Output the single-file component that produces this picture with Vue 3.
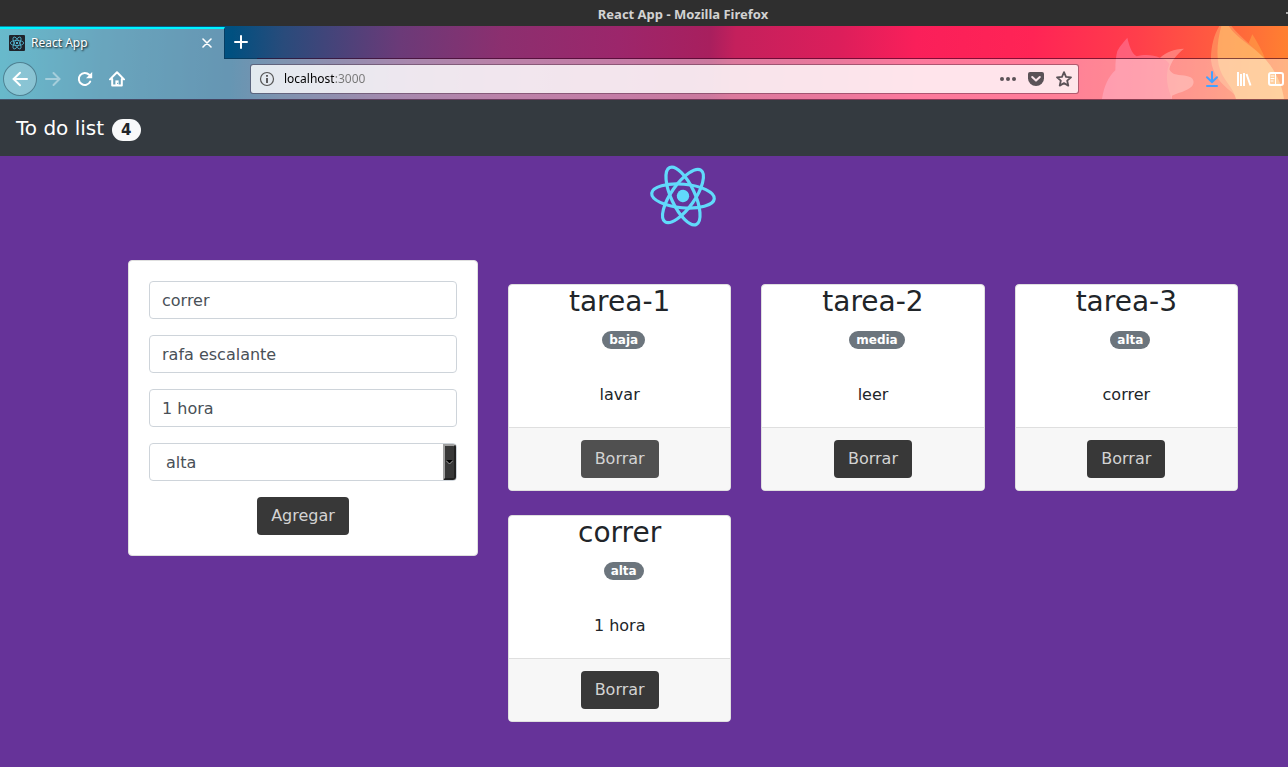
<script setup>
import { ref } from 'vue'

const url = ref('localhost:3000')
const form = ref({ title: 'correr', responsible: 'rafa escalante', description: '1 hora', priority: 'alta' })
const priorities = ['baja', 'media', 'alta']
const tasks = ref([
  { title: 'tarea-1', priority: 'baja', description: 'lavar', hovered: true },
  { title: 'tarea-2', priority: 'media', description: 'leer' },
  { title: 'tarea-3', priority: 'alta', description: 'correr' },
  { title: 'correr', priority: 'alta', description: '1 hora' }
])

function addTask() {
  tasks.value.push({ ...form.value })
}
function removeTask(index) {
  tasks.value.splice(index, 1)
}
</script>

<template>
  <div class="window">
    <div class="titlebar">
      <span class="window-title">React App - Mozilla Firefox</span>
      <span class="minimize"></span>
    </div>

    <header class="chrome">
      <svg class="foxes" viewBox="0 3 594 219" aria-hidden="true">
        <path d="M36 222C42 185 55 155 76 136C76 112 78 92 82 78C90 62 102 50 112 38C117 60 124 84 140 94C160 88 188 88 210 98C230 82 252 71 282 71C262 86 242 110 238 133C245 152 270 150 290 153C312 157 315 172 306 184C290 200 262 204 246 212V222Z" fill="#ff9cc4" fill-opacity=".38" />
        <path d="M210 98C230 82 252 71 282 71C262 86 242 110 238 133C245 152 270 150 290 153C312 157 315 172 306 184C290 200 262 204 246 212V222C232 190 224 150 238 118C235 108 222 102 210 98Z" fill="#ffb480" fill-opacity=".28" />
        <path d="M388 3C372 28 362 68 363 106C367 148 396 180 424 200C433 207 437 214 438 222H582C576 170 548 126 522 98C490 65 454 40 424 3Z" fill="#ffb070" fill-opacity=".5" />
        <path d="M394 3C384 40 378 80 386 120C396 165 430 185 438 222H582C576 170 548 126 522 98C490 65 440 40 416 3Z" fill="#ffe27a" fill-opacity=".36" />
        <path d="M476 54L487 28C502 52 516 78 526 102C508 84 490 70 476 54Z" fill="#ffa048" fill-opacity=".6" />
      </svg>

      <div class="tabstrip">
        <div class="tab">
          <svg class="favicon" viewBox="0 0 16 16" aria-hidden="true">
            <rect width="16" height="16" rx="1" fill="#20232a" />
            <g fill="none" stroke="#55b9d3" stroke-width=".8" transform="translate(8 8)">
              <ellipse rx="6.7" ry="2.6" />
              <ellipse rx="6.7" ry="2.6" transform="rotate(60)" />
              <ellipse rx="6.7" ry="2.6" transform="rotate(120)" />
              <circle r="1.1" fill="#61dafb" stroke="none" />
            </g>
          </svg>
          <button class="tab-title">React App</button>
          <button class="tab-close" aria-label="Cerrar pestaña">
            <svg width="10" height="10" viewBox="0 0 10 10"><path d="M1 1l8 8M9 1L1 9" stroke="#fff" stroke-width="1.6" stroke-linecap="round" /></svg>
          </button>
        </div>
        <button class="new-tab" aria-label="Nueva pestaña">
          <svg width="16" height="16" viewBox="0 0 16 16"><path d="M8 2v12M2 8h12" stroke="#fff" stroke-width="2" stroke-linecap="round" /></svg>
        </button>
      </div>

      <div class="toolbar">
        <button class="back" aria-label="Atrás">
          <svg width="16" height="16" viewBox="0 0 16 16"><path d="M15 8H2M8 1.8L1.6 8L8 14.2" /></svg>
        </button>
        <button class="tool dim" aria-label="Adelante">
          <svg width="16" height="16" viewBox="0 0 16 16"><path d="M1 8h13M8.5 2l6 6l-6 6" /></svg>
        </button>
        <button class="tool" aria-label="Recargar">
          <svg width="16" height="16" viewBox="0 0 16 16"><path d="M13.2 10.6A6 6 0 1 1 12.2 3.8" /><path d="M15.2 1v6.2H9z" fill="#fff" stroke="none" /></svg>
        </button>
        <button class="tool" aria-label="Inicio">
          <svg width="16" height="16" viewBox="0 0 16 16"><path d="M1 8.4L8 1.2l7 7.2M3.2 8v6.6h9.6V8" stroke-linejoin="round" /><path d="M6.4 14.8V9.4h3.2v5.4z" fill="#fff" stroke="none" /><path d="M8.6 11.8v1.2" stroke="#6da9bf" stroke-width="1" stroke-linecap="butt" /></svg>
        </button>

        <div class="urlbar">
          <svg width="16" height="16" viewBox="0 0 16 16" aria-hidden="true"><circle cx="8" cy="8" r="6.5" fill="none" stroke="#555" stroke-width="1.2" /><path d="M8 7v5M8 4v1.8" stroke="#555" stroke-width="1.9" stroke-linecap="butt" /></svg>
          <input v-model="url" class="url" aria-label="Dirección" />
          <button class="url-action" aria-label="Acciones de página">
            <svg width="16" height="16" viewBox="0 0 16 16"><g fill="#5b5257"><circle cx="2" cy="8" r="2" /><circle cx="8" cy="8" r="2" /><circle cx="14" cy="8" r="2" /></g></svg>
          </button>
          <button class="url-action" aria-label="Guardar en Pocket">
            <svg width="16" height="16" viewBox="0 0 16 16"><path d="M2 1h12a2 2 0 0 1 2 2v4.5a8 7.5 0 0 1-16 0V3a2 2 0 0 1 2-2z" fill="#5b5257" /><path d="M4.2 6L8 9.6L11.8 6" fill="none" stroke="#fce4ea" stroke-width="2" stroke-linecap="round" stroke-linejoin="round" /></svg>
          </button>
          <button class="url-action" aria-label="Marcador">
            <svg width="16" height="16" viewBox="0 0 16 16"><path d="M8 1.2l2 4.6l5 .5l-3.800 3.400l1.100 4.900L8 12.100l-4.300 2.500l1.100-4.900L1 6.300l5-.5z" fill="none" stroke="#5b5257" stroke-width="1.8" stroke-linejoin="round" /></svg>
          </button>
        </div>

        <div class="tools-end">
          <button class="tool" aria-label="Descargas">
            <svg class="blue" width="16" height="16" viewBox="0 0 16 16"><path d="M8 1v9.500M3 6.200L8 11l5-4.800M3 15h10" /></svg>
          </button>
          <button class="tool" aria-label="Biblioteca">
            <svg width="16" height="16" viewBox="0 0 16 16"><path d="M2 1v14M5 3v12M8 2v13M10.500 3l4 11.500" stroke-linecap="butt" /></svg>
          </button>
          <button class="tool" aria-label="Barra lateral">
            <svg width="16" height="16" viewBox="0 0 16 16"><rect x="1" y="2" width="14" height="12" rx="2" /><path d="M7.500 2v12M3 5h3M3 7.500h3M3 10h2" stroke-width="1" /></svg>
          </button>
        </div>
      </div>
    </header>

    <div class="page">
      <nav class="navbar">
        <a class="brand" href="#">To do list <span class="count">{{ tasks.length }}</span></a>
      </nav>

      <div class="content">
        <svg class="logo" viewBox="-40 -40 80 80" role="img" aria-label="React">
          <g fill="none" stroke="#61dafb" stroke-width="3.2" transform="rotate(5)">
            <ellipse rx="31.400" ry="11.800" />
            <ellipse rx="31.400" ry="11.800" transform="rotate(60)" />
            <ellipse rx="31.400" ry="11.800" transform="rotate(120)" />
            <circle r="6.200" fill="#61dafb" stroke="none" />
          </g>
        </svg>

        <main class="row">
          <section>
            <form class="card form" @submit.prevent="addTask">
              <input v-model="form.title" class="control" aria-label="Título" />
              <input v-model="form.responsible" class="control" aria-label="Responsable" />
              <input v-model="form.description" class="control" aria-label="Descripción" />
              <div class="select-wrap">
                <select v-model="form.priority" class="control select" aria-label="Prioridad">
                  <option v-for="p in priorities" :key="p">{{ p }}</option>
                </select>
                <span class="arrow">
                  <svg width="7" height="5" viewBox="0 0 7 5"><path d="M0 0h7L3.500 4z" fill="#000" /><path d="M0 .5l3.500 3.500L7 .5" fill="none" stroke="#bbb" stroke-width=".8" /></svg>
                </span>
              </div>
              <button class="btn" type="submit">Agregar</button>
            </form>
          </section>

          <section class="tasks">
            <article v-for="(task, i) in tasks" :key="i" class="card">
              <div class="card-content">
                <h3>{{ task.title }}</h3>
                <span class="badge">{{ task.priority }}</span>
                <p>{{ task.description }}</p>
              </div>
              <footer class="card-footer">
                <button class="btn" :class="{ hovered: task.hovered }" @click="removeTask(i)">Borrar</button>
              </footer>
            </article>
          </section>
        </main>
      </div>
    </div>
  </div>
</template>

<style>
html,
body {
  background: #663399;
}
</style>

<style scoped>
* {
  box-sizing: border-box;
}
button {
  border: 0;
  padding: 0;
  background: none;
  font: inherit;
  cursor: pointer;
}
svg {
  display: block;
  flex: none;
}
.window {
  min-height: 100vh;
  display: flex;
  flex-direction: column;
  overflow: hidden;
}

/* window frame */
.titlebar {
  position: relative;
  height: 26px;
  padding: 2px 0 0 78px;
  display: flex;
  align-items: center;
  justify-content: center;
  background: #2f2f2f;
  color: #d2d2d2;
  font: bold 13px/24px "Noto Sans", sans-serif;
}
.minimize {
  position: absolute;
  right: 0;
  top: 12px;
  width: 2px;
  height: 2px;
  background: #aaa;
}

/* browser chrome */
.chrome {
  position: relative;
  overflow: hidden;
  font: 12px/16px "Noto Sans", sans-serif;
  background: linear-gradient(93deg, #048caa 0%, #066a92 8%, #005080 18%, #294b7b 22%, #6b3a78 31%, #8c2f6f 39%, #9c266b 48%, #a81f5e 55%, #c4205c 57%, #dc1e5b 65%, #fa1f5a 71%, #ff2455 80%, #ff3e4b 88%, #ff5b40 94%, #ff8230 100%);
}
.foxes {
  position: absolute;
  right: 0;
  top: 0;
  width: 198px;
  height: 73px;
}
.tabstrip {
  position: relative;
  display: flex;
  height: 33px;
}
.tab {
  width: 225px;
  padding: 0 12px 2px 9px;
  display: flex;
  align-items: center;
  background: rgba(255, 255, 255, 0.4);
  border-top: 2px solid #00f5ff;
  border-right: 1px solid #063e63;
  margin-top: 1px;
}
.tabstrip::after {
  content: "";
  flex: 1;
  border-bottom: 1px solid rgba(50, 0, 30, 0.6);
}
.favicon {
  width: 16px;
  height: 16px;
}
.tab-title {
  flex: 1;
  margin-left: 6px;
  text-align: left;
  color: #fff;
  text-shadow: 1px 1px 2px #000;
}
.new-tab {
  width: 32px;
  display: flex;
  align-items: center;
  justify-content: center;
  border-bottom: 1px solid #083c5f;
}
.toolbar {
  position: relative;
  display: flex;
  align-items: center;
  height: 41px;
  padding-left: 3px;
  background: rgba(255, 255, 255, 0.4);
  border-bottom: 1px solid rgba(40, 0, 30, 0.55);
}
.toolbar svg {
  fill: none;
  stroke: #fff;
  stroke-width: 2;
  stroke-linecap: round;
}
.toolbar .urlbar svg {
  stroke: none;
}
.toolbar .blue {
  stroke: #45a1ff;
}
.back {
  width: 34px;
  height: 34px;
  display: flex;
  align-items: center;
  justify-content: center;
  border: 1px solid rgba(20, 60, 80, 0.5);
  border-radius: 50%;
  background: rgba(255, 255, 255, 0.22);
}
.tool {
  width: 32px;
  height: 32px;
  display: flex;
  align-items: center;
  justify-content: center;
}
.dim {
  opacity: 0.4;
}
.urlbar {
  flex: 1;
  display: flex;
  align-items: center;
  height: 30px;
  margin: 0 117px;
  padding: 0 6px 0 8px;
  border: 1px solid rgba(60, 30, 50, 0.4);
  background: rgba(255, 255, 255, 0.8);
  background-clip: padding-box;
  border-radius: 3px;
}
.url {
  flex: 1;
  min-width: 0;
  margin-left: 9px;
  padding: 0;
  border: 0;
  outline: 0;
  font: inherit;
  color: transparent;
  caret-color: #000;
  background: linear-gradient(90deg, #000 50px, #777 50px);
  background-clip: text;
}
.url-action {
  width: 16px;
  height: 16px;
  margin-left: 12px;
}
.tools-end {
  display: flex;
  margin-right: -4px;
}

/* page */
.page {
  flex: 1;
  background: #663399;
  color: #212529;
  font: 16px/24px "DejaVu Sans", sans-serif;
}
.navbar {
  height: 56px;
  padding: 0 16px;
  display: flex;
  align-items: center;
  background: #343a40;
}
.brand {
  display: flex;
  align-items: center;
  gap: 8px;
  color: #fff;
  font-size: 20px;
  line-height: 30px;
  text-decoration: none;
}
.count {
  padding: 4px 9px 3px;
  margin-top: 3px;
  border-radius: 12px;
  background: #f8f9fa;
  color: #212529;
  font-size: 15px;
  font-weight: bold;
  line-height: 15px;
}
.content {
  padding-left: 78px;
}
.logo {
  width: 80px;
  height: 80px;
  margin: 0 auto;
}
.row {
  max-width: 1140px;
  margin: 24px auto;
  padding: 0 15px;
  display: grid;
  grid-template-columns: 35fr 73fr;
  gap: 30px;
  align-items: start;
}
.tasks {
  margin-top: 24px;
  display: grid;
  grid-template-columns: repeat(3, 1fr);
  gap: 24px 30px;
}
.card {
  border: 1px solid #dfdfdf;
  border-radius: 4px;
  background: #fff;
  text-align: center;
  overflow: hidden;
}
.form {
  padding: 20px;
  display: flex;
  flex-direction: column;
  gap: 16px;
}
.form .btn {
  align-self: center;
}
.control {
  width: 100%;
  height: 38px;
  padding: 6px 12px;
  border: 1px solid #ced4da;
  border-radius: 4px;
  background: #fff;
  color: #495057;
  font: inherit;
}
.select-wrap {
  position: relative;
}
.select {
  display: block;
  padding: 7px 16px 5px;
  appearance: none;
}
.arrow {
  position: absolute;
  top: 1px;
  right: 1px;
  bottom: 1px;
  width: 13px;
  display: flex;
  align-items: center;
  justify-content: center;
  background: #383838;
  border: 2px solid;
  border-color: #a0a0a0 #222 #222 #a0a0a0;
  border-radius: 0 3px 3px 0;
  pointer-events: none;
}
.btn {
  height: 38px;
  padding: 0 14px;
  border-radius: 4px;
  background: #383838;
  color: #d3d3d3;
}
.btn.hovered {
  background: #505050;
}
.card-content {
  display: flex;
  flex-direction: column;
  align-items: center;
}
h3 {
  margin: 0 0 12px;
  font-size: 28px;
  font-weight: normal;
  line-height: 34px;
}
.badge {
  margin-left: 8px;
  padding: 3px 7px;
  border-radius: 10px;
  background: #6c757d;
  color: #fff;
  font-size: 12px;
  font-weight: bold;
  line-height: 12px;
}
p {
  margin: 34px 0 20px;
}
.card-footer {
  padding: 12px;
  border-top: 1px solid #dfdfdf;
  background: #f7f7f7;
}
</style>
